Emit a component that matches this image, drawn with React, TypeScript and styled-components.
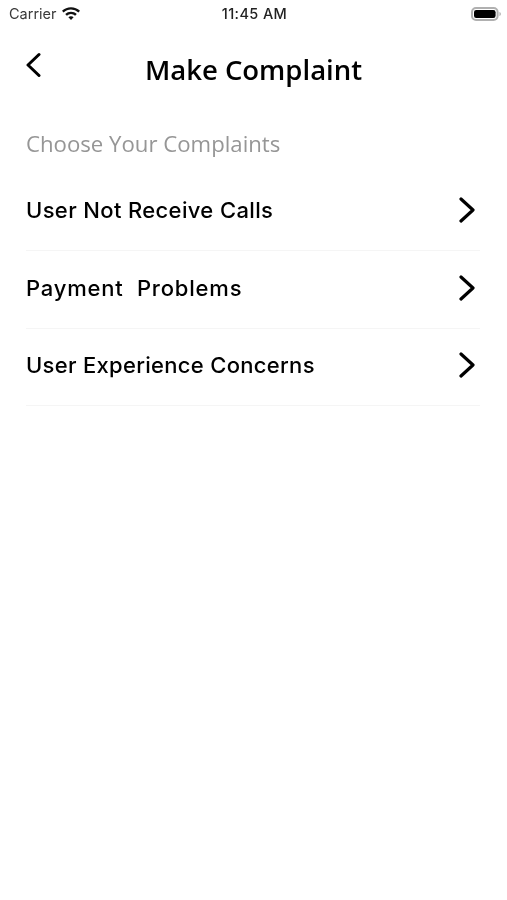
import React from "react";
import styled, { createGlobalStyle } from "styled-components";

const Global = createGlobalStyle`
  html, body { margin: 0; padding: 0; background: #fff; }
  * { box-sizing: border-box; }
`;

const Screen = styled.div`
  width: 507px;
  height: 900px;
  background: #fff;
  overflow: hidden;
  display: flex;
  flex-direction: column;
  filter: blur(0.4px);
`;

const StatusBar = styled.div`
  height: 28px;
  padding: 0 6px 1px 9px;
  display: grid;
  grid-template-columns: 1fr auto 1fr;
  align-items: center;
  font-family: "Inter", "Liberation Sans", sans-serif;
  color: #222;
`;

const StatusLeft = styled.div`
  display: flex;
  align-items: center;
  gap: 4px;
  font-size: 14.5px;
  color: #3a3a3a;
`;

const Clock = styled.div`
  font-size: 14.5px;
  font-weight: 500;
  letter-spacing: 0.4px;
  margin-left: -1px;
`;

const StatusRight = styled.div`
  display: flex;
  justify-content: flex-end;
`;

const Header = styled.header`
  height: 70px;
  padding: 0 26px;
  display: flex;
  align-items: center;
  justify-content: center;
  position: relative;
`;

const BackButton = styled.div`
  position: absolute;
  left: 24px;
  top: 21px;
  display: flex;
`;

const Title = styled.h1`
  margin: 14px 0 0;
  font-family: "Open Sans", sans-serif;
  font-size: 27.5px;
  font-weight: 600;
  color: #000;
  line-height: 34px;
`;

const Content = styled.main`
  padding: 31px 27px 0 26px;
`;

const SectionLabel = styled.div`
  font-family: "Open Sans", sans-serif;
  font-size: 22.2px;
  line-height: 30px;
  color: #969696;
`;

const List = styled.div`
  margin-top: 14.5px;
  display: flex;
  flex-direction: column;
`;

const Row = styled.div`
  height: 77.5px;
  display: flex;
  align-items: center;
  justify-content: space-between;
  border-bottom: 1px solid #f5f5f5;
  padding: 0 5px 3px 0;
`;

const RowLabel = styled.span<{ $tracking: number }>`
  font-family: "Inter", sans-serif;
  font-size: 22px;
  font-weight: 500;
  letter-spacing: ${(p) => p.$tracking}px;
  color: #000;
  white-space: pre;
`;

const Chevron = styled.svg`
  display: block;
  fill: none;
  stroke: #000;
  stroke-width: 3.2;
  stroke-linecap: round;
  stroke-linejoin: round;
`;

const rows = [
  { label: "User Not Receive Calls", tracking: 0.36 },
  { label: "Payment  Problems", tracking: 0.8 },
  { label: "User Experience Concerns", tracking: 0.3 },
];

export default function App() {
  return (
    <Screen>
      <Global />
      <StatusBar>
        <StatusLeft>
          Carrier
          <svg width="20" height="14" viewBox="0 0 20 14" fill="#111">
            <path d="M10 2.2c3.4 0 6.6 1.3 9 3.6l-1.6 1.7A10.7 10.7 0 0 0 10 4.5c-2.8 0-5.400 1.100-7.400 3L1 5.800a13 13 0 0 1 9-3.600z" transform="translate(0 -2)" />
            <path d="M10 6.700c2.200 0 4.200.8 5.800 2.300l-1.700 1.700A6 6 0 0 0 10 9a6 6 0 0 0-4.100 1.700L4.200 9A8.400 8.400 0 0 1 10 6.700z" transform="translate(0 -2)" />
            <path d="M10 11.200c1 0 1.900.4 2.600 1L10 15l-2.600-2.800c.7-.6 1.600-1 2.600-1z" transform="translate(0 -2)" />
          </svg>
        </StatusLeft>
        <Clock>11:45 AM</Clock>
        <StatusRight>
          <svg width="30" height="16" viewBox="0 0 30 16">
            <rect x="1" y="2" width="25.600" height="12" rx="4" fill="none" stroke="#b0b0b0" strokeWidth="2" />
            <rect x="3" y="4" width="21.600" height="8" rx="2.200" fill="#000" />
            <path d="M28.500 6v4c.8-.3 1.300-1 1.300-2s-.5-1.700-1.300-2z" fill="#aaa" />
          </svg>
        </StatusRight>
      </StatusBar>
      <Header>
        <BackButton>
          <svg width="20" height="28" viewBox="0 0 20 28" fill="none" stroke="#000" strokeWidth="3" strokeLinecap="round" strokeLinejoin="round">
            <path d="M15 5.500 L4 16 L15 26.500" />
          </svg>
        </BackButton>
        <Title>Make Complaint</Title>
      </Header>
      <Content>
        <SectionLabel>Choose Your Complaints</SectionLabel>
        <List>
          {rows.map((r) => (
            <Row key={r.label}>
              <RowLabel $tracking={r.tracking}>{r.label}</RowLabel>
              <Chevron width="16" height="26" viewBox="0 0 16 26">
                <path d="M2 2 L14 13 L2 24" />
              </Chevron>
            </Row>
          ))}
        </List>
      </Content>
    </Screen>
  );
}
